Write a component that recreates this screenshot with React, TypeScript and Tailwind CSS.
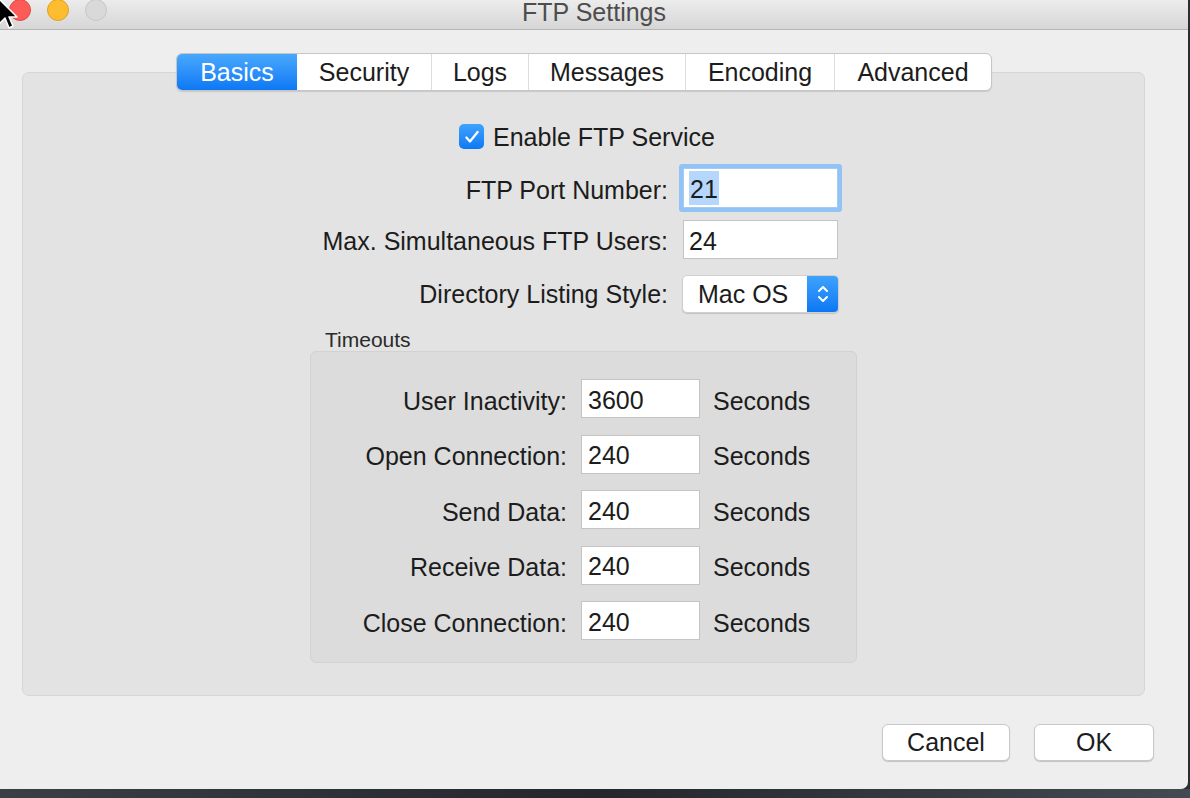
const tabs = ['Basics', 'Security', 'Logs', 'Messages', 'Encoding', 'Advanced']
const tabWidths = ['w-[120px]', 'w-[134px]', 'w-[97px]', 'w-[157px]', 'w-[149px]', 'w-[157px]']

const timeouts = [
  { label: 'User Inactivity:', value: '3600' },
  { label: 'Open Connection:', value: '240' },
  { label: 'Send Data:', value: '240' },
  { label: 'Receive Data:', value: '240' },
  { label: 'Close Connection:', value: '240' },
]

function Cursor() {
  return (
    <svg className="absolute left-[-3px] top-[-2px] z-20" width="22" height="34" viewBox="0 0 22 34">
      <path d="M2 1v25l6-6 4 10 4-2-4-9h8z" fill="#000" stroke="#fff" strokeWidth="1.5" strokeLinejoin="round" />
    </svg>
  )
}

export default function App() {
  return (
    <div className="relative w-[1190px] h-[798px] overflow-hidden bg-[#2b2f35] font-['Liberation_Sans',Arial,sans-serif] text-[25px] text-[#1c1c1c]">
      <Cursor />
      <div className="w-[1188px] h-[789px] bg-[#eeeeee] rounded-br-[7px] flex flex-col">
        {/* title bar */}
        <div className="relative h-[30px] shrink-0 bg-gradient-to-b from-[#ececec] to-[#d6d6d6] border-b border-[#b5b5b5] flex items-start">
          <div className="flex gap-[16px] pl-[9px] -mt-[1px]">
            <span className="w-[22px] h-[22px] rounded-full bg-[#fd5b57] border border-[#e2463f]" />
            <span className="w-[22px] h-[22px] rounded-full bg-[#fdbd2e] border border-[#e0a024]" />
            <span className="w-[22px] h-[22px] rounded-full bg-[#d9d9d9] border border-[#c6c6c6]" />
          </div>
          <div className="absolute inset-x-0 top-0 text-center text-[#4d4d4d] leading-[24px]">FTP Settings</div>
        </div>

        {/* group box */}
        <div className="ml-[22px] mt-[42px] w-[1123px] h-[624px] rounded-[7px] bg-[#e3e3e3] border border-[#d6d6d6] flex flex-col">
          <div className="flex justify-center -mt-[20px] pl-[1px]">
            <div className="flex h-[38px] rounded-[6px] bg-white border border-[#c6c6c6] shadow-[0_1px_1px_rgba(0,0,0,0.12)] overflow-hidden">
              {tabs.map((t, i) => (
                <div
                  key={t}
                  className={`${tabWidths[i]} flex items-center justify-center leading-none pt-[1px] ${
                    i === 0
                      ? 'bg-gradient-to-b from-[#48a8fd] to-[#0a78f5] text-white'
                      : 'text-[#1c1c1c] border-l border-[#dcdcdc]'
                  } ${i === 1 ? 'border-l-0' : ''}`}
                >
                  {t}
                </div>
              ))}
            </div>
          </div>

          {/* enable checkbox */}
          <div className="flex items-center ml-[436px] mt-[33px] h-[25px] gap-[9px]">
            <span className="w-[25px] h-[25px] rounded-[5px] bg-gradient-to-b from-[#3ea2fd] to-[#0b79f4] flex items-center justify-center">
              <svg width="18" height="18" viewBox="0 0 16 16" fill="none">
                <path d="M3 8.5l3.2 3.5L13 3.5" stroke="#fff" strokeWidth="2" strokeLinecap="round" strokeLinejoin="round" />
              </svg>
            </span>
            <span className="leading-none pt-[2px]">Enable FTP Service</span>
          </div>

          {/* port */}
          <div className="flex items-center ml-[277px] mt-[19px]">
            <div className="w-[368px] text-right leading-none pt-[4px]">FTP Port Number:</div>
            <div className="ml-[15px] w-[155px] h-[40px] bg-white border border-[#a9c9ee] rounded-[1px] ring-[4px] ring-[#92c3f6] flex items-center pl-[5px]">
              <span className="bg-[#b5d7fd] leading-[32px] pt-[2px] px-[1px]">21</span>
            </div>
          </div>

          {/* users */}
          <div className="flex items-center ml-[277px] mt-[12px]">
            <div className="w-[368px] text-right leading-none pt-[4px]">Max. Simultaneous FTP Users:</div>
            <div className="ml-[15px] w-[155px] h-[39px] bg-white border border-[#c4c4c4] flex items-center pl-[5px] pt-[3px] leading-none">
              24
            </div>
          </div>

          {/* listing style */}
          <div className="flex items-center ml-[277px] mt-[16px]">
            <div className="w-[368px] text-right leading-none pt-[1px]">Directory Listing Style:</div>
            <div className="ml-[14px] w-[157px] h-[38px] flex rounded-[5px] overflow-hidden bg-white border border-[#cfcfcf] shadow-[0_1px_1px_rgba(0,0,0,0.15)]">
              <div className="flex-1 flex items-center pl-[15px] leading-none">Mac OS</div>
              <div className="w-[31px] bg-gradient-to-b from-[#3ea2fd] to-[#0a77f3] flex items-center justify-center">
                <svg width="14" height="24" viewBox="0 0 14 24" fill="none">
                  <path d="M3 9l4-4 4 4M3 15l4 4 4-4" stroke="#fff" strokeWidth="2" strokeLinecap="round" strokeLinejoin="round" />
                </svg>
              </div>
            </div>
          </div>

          {/* timeouts */}
          <div className="ml-[302px] mt-[15px] text-[21px] leading-[24px] text-[#2a2a2a]">Timeouts</div>
          <div className="ml-[287px] -mt-[1px] w-[547px] h-[312px] rounded-[6px] bg-[#dcdcdc] border border-[#d2d2d2] flex flex-col gap-[16.5px] pt-[27px]">
            {timeouts.map(r => (
              <div key={r.label} className="flex items-center">
                <div className="w-[256px] text-right leading-none pt-[5px]">{r.label}</div>
                <div className="ml-[14px] w-[119px] h-[39px] bg-white border border-[#c4c4c4] flex items-center pl-[6px] pt-[3px] leading-none">
                  {r.value}
                </div>
                <div className="ml-[13px] leading-none pt-[5px]">Seconds</div>
              </div>
            ))}
          </div>
        </div>

        {/* buttons */}
        <div className="flex justify-end gap-[24px] mt-[28px] pr-[34px]">
          <button className="w-[128px] h-[37px] bg-white rounded-[6px] border border-[#c8c8c8] shadow-[0_1px_1px_rgba(0,0,0,0.18)] leading-none">
            Cancel
          </button>
          <button className="w-[120px] h-[37px] bg-white rounded-[6px] border border-[#c8c8c8] shadow-[0_1px_1px_rgba(0,0,0,0.18)] leading-none">
            OK
          </button>
        </div>
      </div>
      <div className="h-[9px] bg-gradient-to-r from-[#3a3f46] via-[#23272c] to-[#444a52]" />
    </div>
  )
}
